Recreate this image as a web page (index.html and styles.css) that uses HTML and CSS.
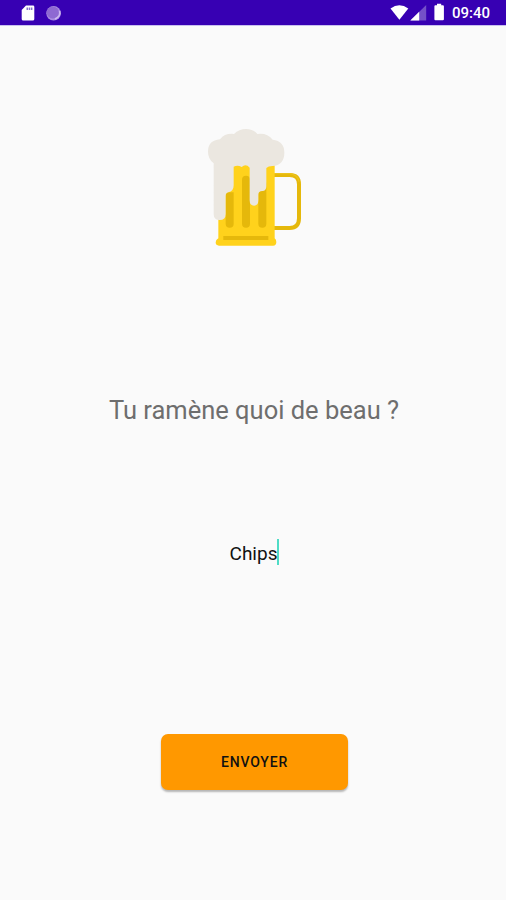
FILE: index.html
```html
<!DOCTYPE html>
<html lang="fr">
<head>
<meta charset="utf-8">
<title>Envoyer</title>
<link rel="stylesheet" href="styles.css">
</head>
<body>
<header class="status">
  <svg class="status-left" viewBox="0 0 50 25" width="50" height="25">
    <path fill="#fff" d="M26 5.600h7q1.300 0 1.300 1.300V19q0 1.600-1.600 1.600h-9.400q-1.600 0-1.600-1.600V10z"/>
    <path fill="#8870d0" d="M26.500 7.500h1.500v2.500h-1.500zM28.700 7.500h1.500v2.500h-1.500zM30.900 7.500h1.500v2.500h-1.500z"/>
  </svg>
  <svg class="status-sync" viewBox="0 0 18 18" width="18" height="18">
    <circle cx="8.600" cy="9.300" r="7.300" fill="#a88be0"/>
    <circle cx="7.800" cy="8.400" r="6" fill="#8e69d2"/>
    <path d="M14.600 7Q16 12.500 10 15" fill="none" stroke="#cdb9f0" stroke-width="1.500"/>
  </svg>
  <svg class="status-right" viewBox="0 0 56 25" width="56" height="25">
    <path fill="#fff" d="M.5 8.500Q9.400 2.200 18.300 8.500L9.400 19.800z"/>
    <path fill="#7450c8" d="M36.200 5V20.500H20.300z"/>
    <path fill="#fff" d="M29.200 11.800V20.500H20.300z"/>
    <path fill="#fff" d="M47 3.700h4.200v1.600h1.700q1 0 1 1v12.900q0 1-1 1h-7.500q-1 0-1-1V6.300q0-1 1-1H47z"/>
  </svg>
  <span class="clock">09:40</span>
</header>
<main class="screen">
  <svg class="beer" viewBox="0 0 360 435" width="120" height="145">
    <path d="M236 180H284Q312 180 312 208V310Q312 339 284 339H236" fill="none" stroke="#e5b80b" stroke-width="12"/>
    <path d="M236 176H284Q307 178 312 200" fill="none" stroke="#edc31c" stroke-width="4"/>
    <path d="M70 145H239V370Q244 373 244 381Q244 392 234 392H72Q62 392 62 382Q62 374 70 370z" fill="#ffd21c"/>
    <g fill="#e5b80b">
      <rect x="141" y="182" width="24" height="156" rx="12"/>
      <rect x="190" y="195" width="24" height="143" rx="12"/>
      <rect x="85" y="363" width="135" height="12"/>
    </g>
    <path d="M92 232H116V326Q116 338 104 338Q92 338 92 326z" fill="#e5b80b"/>
    <path d="M56 145Q39 132 39 110Q39 76 75 73Q90 54 117 57Q132 42 153 42Q175 42 187 57Q215 52 233 74Q268 78 268 113Q268 150 232 153Q220 153 214 159V214Q214 228 202 228Q190 228 190 239V256Q190 272 177 272Q164 272 164 256V158Q158 151 151 151Q146 151 140 156Q128 149 116 155V211Q116 229 100 232Q92 234 92 243V297Q92 315 74 315Q56 315 56 297z" fill="#ebe7e0"/>
  </svg>
  <h1 class="question">Tu ramène quoi de beau ?</h1>
  <div class="answer"><span>Chips</span><i class="caret"></i></div>
  <button class="send">ENVOYER</button>
</main>
</body>
</html>
```
FILE: styles.css
```css
* { box-sizing: border-box; }

body {
  margin: 0;
  height: 900px;
  display: flex;
  flex-direction: column;
  background: #fafafa;
  font-family: Roboto, sans-serif;
  overflow: hidden;
}

.status {
  height: 25px;
  flex: none;
  display: flex;
  align-items: center;
  padding-right: 16px;
  background: #3700b3;
  box-shadow: 0 1px 0 #c9c0ef;
}

.status-left { margin-right: -5px; }

.status-right { margin-left: auto; }

.clock {
  width: 39px;
  margin-left: 5px;
  padding: 2px 0 0 1px;
  color: #fff;
  font-size: 15px;
  font-weight: 500;
  line-height: 25px;
  white-space: nowrap;
}

.screen {
  flex: 1;
  display: flex;
  flex-direction: column;
  align-items: center;
  padding-top: 90px;
}

.beer { margin-left: 4px; }

.question {
  margin: 130px 0 0;
  padding-left: 2px;
  color: #6e6e6e;
  font-size: 25.5px;
  font-weight: 400;
  line-height: 40px;
  white-space: nowrap;
}

.answer {
  display: flex;
  align-items: center;
  height: 28px;
  margin: 109px 0 0 3px;
  color: #111;
  font-size: 19px;
}

.caret {
  width: 2px;
  height: 26px;
  margin-top: -2px;
  background: #4fdcc6;
}

.send {
  width: 187px;
  height: 56px;
  margin: 167px 0 0 3px;
  padding: 1px 0 0;
  border: 0;
  border-radius: 7px;
  background: #ff9800;
  box-shadow: 0 2px 2px rgba(0, 0, 0, .28);
  color: #111;
  font: 500 14px/55px Roboto, sans-serif;
  letter-spacing: .8px;
}
```
